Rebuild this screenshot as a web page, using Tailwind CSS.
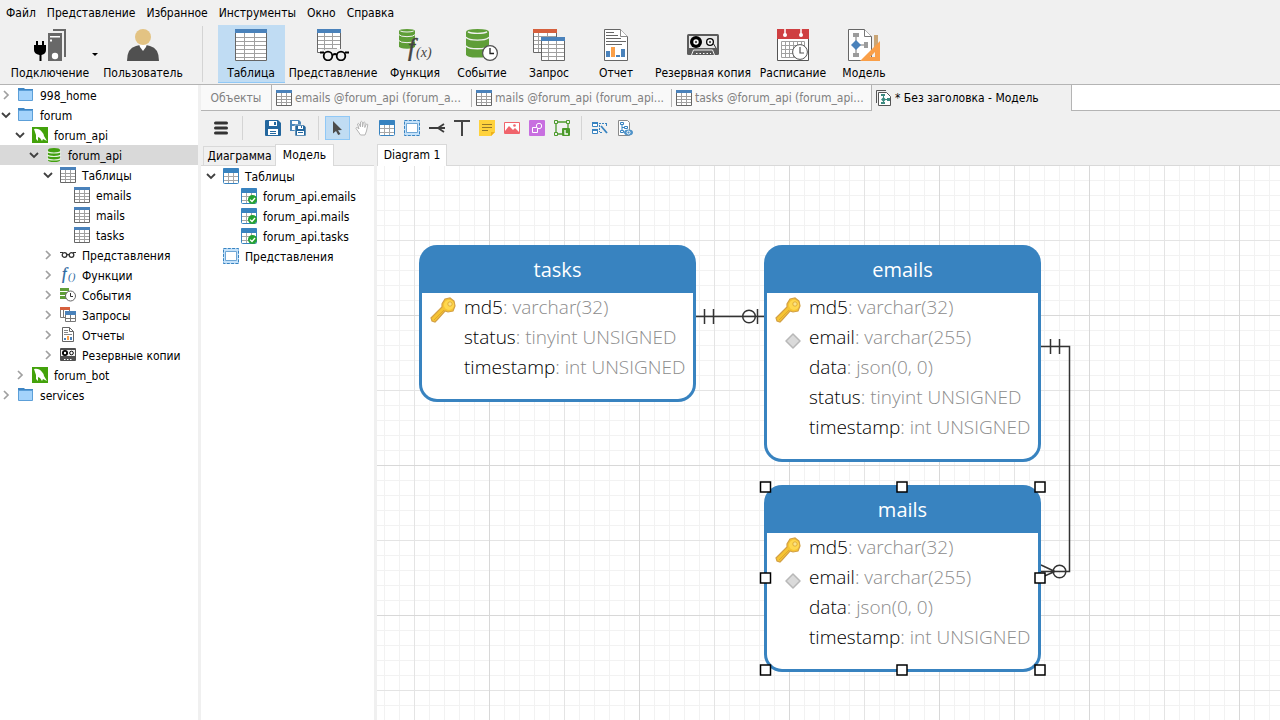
<!DOCTYPE html>
<html lang="ru">
<head>
    <meta charset="UTF-8">
    <meta name="viewport" content="width=device-width, initial-scale=1.0">
    <title>Без заголовка - Модель</title>
    <script src="https://cdn.jsdelivr.net/npm/@tailwindcss/browser@4"></script>
</head>
<body class="h-screen flex flex-col overflow-hidden bg-[#f0f0f0] text-black text-xs font-['DejaVu_Sans_Condensed','DejaVu_Sans',sans-serif]">

<!-- Icon set -->
<svg class="hidden">
    <symbol id="table32" viewBox="0 0 32 32">
        <path fill="#fff" d="M0 0h32v32H0z"/>
        <path stroke="#a0a0a0" d="M1 8.500h30M1 12.500h30M1 16.500h30M1 20.500h30M1 24.500h30M1 28.500h30M9.500 4v27M19.500 4v27"/>
        <path fill="none" stroke="#666" d="M.5.5h31v31H.5z"/>
        <path fill="#4a82bb" d="M0 0h32v4H0z"/>
    </symbol>
    <symbol id="table16" viewBox="0 0 16 16">
        <path fill="#fff" d="M0 0h16v16H0z"/>
        <path stroke="#a0a0a0" d="M1 6.500h14M1 9.500h14M1 12.500h14M5.500 3v12M10.500 3v12"/>
        <path fill="none" stroke="#666" d="M.5.5h15v15H.5z"/>
        <path fill="#4a82bb" d="M0 0h16v3H0z"/>
    </symbol>
    <symbol id="btable" viewBox="0 0 16 16">
        <rect x=".5" y=".5" width="15" height="15" rx="1" fill="#fff" stroke="#3883c0"/>
        <path stroke="#a8a8a8" d="M1 8.500h14M1 12.500h14M5.500 4v11M10.500 4v11"/>
        <path fill="#3883c0" d="M0 1q0-1 1-1h14q1 0 1 1v4H0z"/>
    </symbol>
    <symbol id="tablecheck" viewBox="0 0 16 16">
        <use href="#btable"/>
        <circle cx="11.500" cy="11.500" r="4.500" fill="#25a233"/>
        <path fill="none" stroke="#fff" stroke-width="1.300" d="M9 11.600l2 1.900 3-3.500"/>
    </symbol>
    <symbol id="bview" viewBox="0 0 16 16">
        <path fill="#c5e2fa" d="M0 0h16v16H0z"/>
        <path fill="none" stroke="#3883c0" stroke-dasharray="3 1.300" d="M.5.5h15v15H.5z"/>
        <path fill="#fff" stroke="#6ea6d5" d="M2.500 3.500h11v9h-11z"/>
    </symbol>
    <symbol id="server" viewBox="0 0 32 32">
        <path fill="#686868" d="M19 0h13v28h-2V2H19zM14 4h14v28H14z"/>
        <path fill="#fff" d="M16 7h10v1.500H16zM16 10.500h2v2h-2z"/>
        <circle cx="21" cy="27" r="3.200" fill="#fff"/>
        <path fill="#000" d="M2 12h2v4h4v-4h2v4h2v5q0 4-4.500 5v6h-2v-6Q0 25 0 21v-5h2z"/>
    </symbol>
    <symbol id="user" viewBox="0 0 32 32">
        <path fill="#505050" d="M0 32q0-13 9-15l4-1h6l4 1q9 2 9 15z"/>
        <path fill="#fff" d="M12 15h8l-1 3-3 4-3-4z"/>
        <circle cx="16" cy="8" r="8" fill="#e3c383"/>
    </symbol>
    <symbol id="view32" viewBox="0 0 32 32">
        <path fill="#fff" d="M0 0h24v20H5v3H0z"/>
        <path stroke="#a0a0a0" d="M0 7.500h24M0 11.500h24M0 15.500h24M0 19.500h20M7.500 4v17M15.500 4v16"/>
        <path fill="none" stroke="#666" d="M4 23.500H.5V1M23.500 1v19"/>
        <path fill="#4a82bb" d="M0 0h24v4H0z"/>
        <path fill="none" stroke="#000" stroke-width="1.800" d="M3 23.500h4M16 26q2-2 4 0M28 23.500h4"/>
        <circle cx="11" cy="27" r="4.300" fill="#f0f0f0" stroke="#000" stroke-width="1.800"/>
        <circle cx="24" cy="27" r="4.300" fill="#f0f0f0" stroke="#000" stroke-width="1.800"/>
    </symbol>
    <symbol id="db" viewBox="0 0 24 30" preserveAspectRatio="none">
        <path fill="#5f9e38" d="M0 3Q0 0 12 0t12 3v23q0 3.500-12 3.500T0 26z"/>
        <path fill="none" stroke="#f0f0f0" stroke-width="1.500" d="M0 8.500q2 3 12 3t12-3M0 17.500q2 3 12 3t12-3M2 3q3 1.500 10 1.500T22 3"/>
    </symbol>
    <symbol id="func32" viewBox="0 0 34 32">
        <use href="#db" x="1" y="0" width="16" height="20"/>
        <text x="10" y="27" font-family="Liberation Serif" font-style="italic" font-size="25" fill="#444" stroke="#444" stroke-width=".5">f</text>
        <text x="18" y="28" font-family="Liberation Serif" font-style="italic" font-size="14" fill="#444">(x)</text>
    </symbol>
    <symbol id="event32" viewBox="0 0 32 32">
        <use href="#db" x="0" y="0" width="23" height="29"/>
        <circle cx="24" cy="24" r="7.400" fill="#fff" stroke="#505050" stroke-width="1.200"/>
        <path fill="none" stroke="#222" stroke-width="1.300" d="M24 19v5.500h4"/>
    </symbol>
    <symbol id="query32" viewBox="0 0 32 32">
        <path fill="#fff" stroke="#666" d="M.5.5h23v23H.5z"/>
        <path stroke="#a0a0a0" d="M1 7.500h22M1 11.500h22M1 15.500h22M1 19.500h22M5.500 4v19M14.500 4v19"/>
        <path fill="#d6603d" d="M0 0h24v4H0z"/>
        <path fill="#fff" stroke="#666" d="M8.500 8.500h23v23h-23z"/>
        <path stroke="#a0a0a0" d="M9 15.500h22M9 19.500h22M9 23.500h22M9 27.500h22M15.500 12v19M23.500 12v19"/>
        <path fill="#4a82bb" d="M8 8h24v4H8z"/>
    </symbol>
    <symbol id="report32" viewBox="0 0 24 32">
        <path fill="#fff" stroke="#666" d="M.5.5h16l7 7v24H.5z"/>
        <path fill="#fff" stroke="#888" d="M16.500.5v7h7"/>
        <path stroke="#666" d="M2 3.500h8M2 6.500h12M2 9.500h15M2 12.500h20M2 15.500h16"/>
        <path fill="#4a82bb" d="M2 22h4v6H2zM12 26h4v2h-4zM17 20h4v8h-4z"/>
        <path fill="#fa9f48" d="M7 18h4v10H7z"/>
    </symbol>
    <symbol id="cassette" viewBox="0 0 32 32">
        <rect y="5" width="32" height="21" rx="1.500" fill="#5c5c5c"/>
        <path fill="#e8e8e8" d="M2 7h28v12H2z"/>
        <circle cx="9" cy="13" r="6" fill="#000"/><circle cx="9" cy="13" r="2.700" fill="#fff"/><circle cx="9" cy="13" r="1.200" fill="#555"/>
        <circle cx="23" cy="13" r="4" fill="#000"/><circle cx="23" cy="13" r="2.700" fill="#fff"/><circle cx="23" cy="13" r="1.200" fill="#555"/>
        <path stroke="#333" d="M26 14l3 5"/>
        <path fill="#5c5c5c" stroke="#f0f0f0" d="M4.500 26l2-5h19l2 5"/>
        <path stroke="#fff" stroke-dasharray="1.500 2" d="M9 24.500h15"/>
    </symbol>
    <symbol id="schedule" viewBox="0 0 32 32">
        <path fill="#fff" stroke="#555" d="M.5.5h31v31H.5z"/>
        <path fill="#cf3f41" d="M0 0h32v10H0z"/>
        <path stroke="#fff" stroke-width="1.500" d="M8 0v5M24 0v5"/>
        <circle cx="8" cy="6" r="2" fill="#fff"/><circle cx="24" cy="6" r="2" fill="#fff"/>
        <path fill="none" stroke="#a0a0a0" d="M4.500 12.500h23v16h-23zM4.500 16.500h23M4.500 20.500h23M4.500 24.500h23M8.500 12v16M12.500 12v16M16.500 12v16M20.500 12v16M24.500 12v16"/>
        <circle cx="23" cy="23" r="7.400" fill="#fff" stroke="#555"/>
        <path fill="none" stroke="#555" stroke-width="1.200" d="M23 18v6h4"/>
    </symbol>
    <symbol id="model32" viewBox="0 0 32 32">
        <path fill="#fff" stroke="#666" d="M.5.5h16l7 7v24H.5z"/>
        <path fill="#fff" stroke="#777" d="M16.500.5v7h7"/>
        <path stroke="#777" d="M8 6v20M8 16h10"/>
        <path fill="#9c9c9c" d="M5 4h6v4H5zM5 24h6v4H5zM16 13h4v6h-4z"/>
        <path fill="#4a82bb" d="M8 11l5 5-5 5-5-5z"/>
        <path fill="#c9a576" d="M26 6h4v14h-4z"/>
        <path fill="#fa9f48" fill-rule="evenodd" d="M32 12v20H12zM27 23l-5 5h5z"/>
    </symbol>
    <symbol id="folder" viewBox="0 0 16 16">
        <path fill="#3d85c4" d="M0 1h6l1 1h8v4H0z"/>
        <path fill="#a4d3fb" stroke="#5c9fd8" d="M.5 3.500h14v10H.5z"/>
    </symbol>
    <symbol id="mysql" viewBox="0 0 16 16">
        <path fill="#43a20b" d="M0 0h16v16H0z"/>
        <path fill="#fff" d="M2 2q5-1 8 3 2 2 2 4l3 5-4-2-1 2-2-3-2-1v4l-2-2V8z"/>
    </symbol>
    <symbol id="dbgreen" viewBox="0 0 16 16">
        <path fill="#43a00f" d="M2 3q0-2 6-2t6 2v10q0 2-6 2t-6-2z"/>
        <path fill="none" stroke="#e6f2df" stroke-width="1.200" d="M1 4.500q2 1.500 7 1.500t7-1.500M1 8q2 1.500 7 1.500T15 8M1 11.500q2 1.500 7 1.500t7-1.500"/>
    </symbol>
    <symbol id="glasses" viewBox="0 0 16 16">
        <path fill="none" stroke="#333" stroke-width="1.200" d="M0 5.500h3M13 5.500h3M7 8q1-1 2 0"/>
        <circle cx="4.500" cy="8" r="2.300" fill="#fff" stroke="#333" stroke-width="1.300"/>
        <circle cx="11.500" cy="8" r="2.300" fill="#fff" stroke="#333" stroke-width="1.300"/>
    </symbol>
    <symbol id="func16" viewBox="0 0 16 16">
        <text x="2" y="12" font-family="Liberation Serif" font-style="italic" font-size="16" fill="#2a66a0" stroke="#2a66a0" stroke-width=".3">f</text>
        <text x="8" y="13" font-family="Liberation Serif" font-style="italic" font-size="11" fill="#2a66a0">()</text>
    </symbol>
    <symbol id="event16" viewBox="0 0 16 16">
        <path fill="#5f9e38" d="M0 1h9v11H0z"/>
        <path stroke="#fff" d="M0 4.500h8M0 8.500h5"/>
        <circle cx="10.500" cy="9" r="5" fill="#fff" stroke="#666"/>
        <path fill="none" stroke="#333" d="M10.500 6v3.500H13"/>
    </symbol>
    <symbol id="query16" viewBox="0 0 16 16">
        <path fill="#fff" stroke="#777" d="M.5 1.500h9v9h-9zM3.500 3v7"/>
        <path fill="#d6603d" d="M0 0h10v3H0z"/>
        <path fill="#fff" stroke="#777" d="M5.500 5.500h10v9h-10zM5 11.500h10M10.500 7v8"/>
        <path fill="#4a82bb" d="M5 4h11v4H5z"/>
    </symbol>
    <symbol id="report16" viewBox="0 0 16 16">
        <path fill="#fff" stroke="#666" d="M2.500.5h7l4 4v10h-11zM9.500.5v4h4"/>
        <path stroke="#888" d="M4 3.500h4M4 5.500h4M4 7.500h8"/>
        <path fill="#4a82bb" d="M4 11h2v2H4zM10 10h2v3h-2z"/>
        <path fill="#fa9f48" d="M7 9h2v4H7z"/>
    </symbol>
    <symbol id="cassette16" viewBox="0 0 16 16">
        <rect y="1" width="16" height="13" rx="1" fill="#505050"/>
        <path fill="#f4f4f4" d="M1 3h14v6H1z"/>
        <circle cx="5" cy="6" r="3" fill="#000"/><circle cx="5" cy="6" r="1.200" fill="#fff"/>
        <circle cx="11.500" cy="6" r="1.800" fill="#fff" stroke="#000"/>
        <path stroke="#fff" stroke-dasharray="1.500 1.500" d="M4 12.500h9"/>
    </symbol>
    <symbol id="model16" viewBox="0 0 16 16">
        <path fill="none" stroke="#555" d="M.5 13V.5H10"/>
        <path fill="#fff" stroke="#555" d="M2.500 2.500h8l4 4v9h-12z"/>
        <path stroke="#3c8a80" d="M7.500 5v9M7 9.500h6"/>
        <path fill="#3c8a80" d="M5 4h4v2H5zM5 12h4v2H5zM11 8h3v3h-3zM7.500 7L10 9.500 7.500 12 5 9.500z"/>
    </symbol>
    <symbol id="right" viewBox="0 0 12 12"><path fill="none" stroke="#a0a0a0" stroke-width="1.700" d="M4 2l4 4-4 4"/></symbol>
    <symbol id="down" viewBox="0 0 12 12"><path fill="none" stroke="#404040" stroke-width="1.800" d="M2 4l4 4 4-4"/></symbol>
    <symbol id="save" viewBox="0 0 16 16">
        <path fill="#24679e" d="M1 0h12l3 3v12q0 1-1 1H1q-1 0-1-1V1q0-1 1-1z"/>
        <path fill="#fff" d="M4 1h8v5H4zM3 9h10v6H3z"/>
        <path fill="#24679e" d="M9 2h2v3H9z"/>
        <path stroke="#24679e" d="M5 11.500h6M5 13.500h6"/>
    </symbol>
    <symbol id="saveall" viewBox="0 0 16 16">
        <path fill="#4b87ba" d="M0 0h9l2 2v9H0z"/><path fill="#fff" d="M2 1h6v3H2zM2 6h4v4H2z"/>
        <path fill="#24679e" stroke="#f0f0f0" stroke-width=".6" d="M5 5h9l2 2v9H5z"/>
        <path fill="#fff" d="M8 6h5v3H8zM7 11h7v4H7z"/><path fill="#24679e" d="M11 6h1v2h-1zM8 12h5v1H8z"/>
    </symbol>
    <symbol id="cursor" viewBox="0 0 16 16"><path fill="#4c4c4c" d="M4 1l9 9-4 .3L11.500 14l-2.300 1L7 11l-3 2.500z"/></symbol>
    <symbol id="hand" viewBox="0 0 16 16"><path fill="#fff" stroke="#b4b4b4" d="M4.500 12L2 8.500q0-1.500 1.500-.8L5 9 3.500 4q.8-1.300 1.700 0L6.500 7V2q1-1.300 1.800 0L8.500 7l.9-4.500q1-1 1.700.2L10.800 7.500l1.500-3.300q1.300-.6 1.500.6L12.500 11l-1.500 4H6.500z"/></symbol>
    <symbol id="relation" viewBox="0 0 16 16"><path fill="none" stroke="#3c3c3c" stroke-width="1.800" d="M0 8h16M9 8l6-4M9 8l6 4"/></symbol>
    <symbol id="label" viewBox="0 0 16 16"><path fill="#444" d="M0 0h16v2H9v14H7V2H0z"/></symbol>
    <symbol id="note" viewBox="0 0 16 16">
        <path fill="#ffd23c" d="M0 0h16v12l-4 4H0z"/><path fill="#eeb21d" d="M16 12h-4v4z"/>
        <path stroke="#96782a" d="M3 4.500h10M3 7.500h10M3 10.500h6"/>
    </symbol>
    <symbol id="image" viewBox="0 0 16 16">
        <path fill="#fff" stroke="#f0646c" d="M.5 2.500h15v11H.5z"/>
        <path fill="#f0646c" d="M1 11l4-5 4 4 2-2 4 4v2H1z"/><circle cx="10.500" cy="5.500" r="1.300" fill="#f0646c"/>
    </symbol>
    <symbol id="shape" viewBox="0 0 16 16">
        <rect width="16" height="16" rx="1" fill="#c86fe0"/>
        <path fill="none" stroke="#fff" d="M3.500 7.500h5v5h-5z"/><circle cx="10" cy="6" r="2.700" fill="#c86fe0" stroke="#fff"/>
    </symbol>
    <symbol id="layer" viewBox="0 0 16 16">
        <path fill="none" stroke="#4c9a2c" stroke-width="1.300" d="M2 2h12v12H2z"/>
        <path fill="#f0f0f0" stroke="#4c9a2c" d="M.5.5h3v3h-3zM12.500.5h3v3h-3zM.5 12.500h3v3h-3z"/>
        <rect x="8" y="8" width="8" height="8" rx="1" fill="#4c9a2c"/><path fill="none" stroke="#fff" stroke-width="1.300" d="M11 10v4h3"/>
    </symbol>
    <symbol id="autolayout" viewBox="0 0 16 16">
        <path fill="#fff" stroke="#3883c0" d="M.5 2.500h5v4h-5zM.5 9.500h5v4h-5z"/><path stroke="#3883c0" stroke-width="2" d="M0 3h6M0 10h6"/>
        <path fill="none" stroke="#3883c0" stroke-dasharray="2 1" d="M7 3.500h8M14.500 4v3M8 12.500h3M7.500 5v7"/>
        <path stroke="#3883c0" stroke-width="1.800" d="M9 6l6 7"/>
    </symbol>
    <symbol id="modelview" viewBox="0 0 16 16">
        <path fill="#fff" stroke="#8a8a8a" d="M1.500.5h9l2 2v13h-11z"/>
        <path fill="none" stroke="#3883c0" d="M3.500 2.500h3v2h-3zM7.500 6.500h3v2h-3zM3.500 10.500h3v2h-3zM5 5v5M5 7.500h2"/>
        <ellipse cx="11.500" cy="12.500" rx="4.500" ry="3" fill="#4f93c9"/><circle cx="11.500" cy="12.500" r="1.500" fill="#4f93c9" stroke="#fff"/>
    </symbol>
    <symbol id="key" viewBox="0 0 26 26">
        <path fill="#f6c433" stroke="#d3a045" stroke-width="1.200" d="M15 2l5-1 4 3 1 5-2 5-5 1-3-1-8 9-2 2-3-1-1-3 11-11V7z"/>
        <path fill="none" stroke="#e0a82c" d="M4 23l10-10"/>
        <circle cx="19" cy="8" r="5" fill="#ffd84f"/><circle cx="20" cy="7" r="2.200" fill="#fbe38a" stroke="#d9a32d" stroke-width=".8"/>
    </symbol>
    <symbol id="diamond" viewBox="0 0 16 16"><path fill="#dadada" stroke="#b8b8b8" stroke-width="1.500" stroke-linejoin="round" d="M8 1l7 7-7 7-7-7z"/></symbol>
</svg>

<nav class="flex shrink-0 h-[25px] items-center gap-[11px] pl-1.5">
    <button>Файл</button>
    <button>Представление</button>
    <button>Избранное</button>
    <button>Инструменты</button>
    <button>Окно</button>
    <button>Справка</button>
</nav>

<header class="flex shrink-0 h-[60px] border-b border-[#b4b4b4] whitespace-nowrap">
    <button class="w-[100px] h-[58px] pt-1 flex flex-col items-center gap-1 relative">
        <svg class="size-8"><use href="#server"/></svg>
        <span>Подключение</span>
        <span class="absolute right-0.5 top-7 border-x-3 border-t-3 border-x-transparent border-t-black"></span>
    </button>
    <button class="w-[86px] h-[58px] pt-1 flex flex-col items-center gap-1"><svg class="size-8"><use href="#user"/></svg><span>Пользователь</span></button>
    <div class="w-px h-14 ml-4 mr-[15px] mt-px bg-[#d4d4d4]"></div>
    <button class="w-[67px] h-[58px] pt-1 pr-px flex flex-col items-center gap-1 bg-[#c0dcf3] border-b border-[#90c8f6]"><svg class="size-8 shrink-0"><use href="#table32"/></svg><span>Таблица</span></button>
    <button class="w-[97px] h-[58px] pt-1 pr-px flex flex-col items-center gap-1"><svg class="size-8"><use href="#view32"/></svg><span>Представление</span></button>
    <button class="w-[67px] h-[58px] pt-1 pr-px flex flex-col items-center gap-1"><svg class="w-[34px] h-8"><use href="#func32"/></svg><span>Функция</span></button>
    <button class="w-[67px] h-[58px] pt-1 pr-px flex flex-col items-center gap-1"><svg class="size-8"><use href="#event32"/></svg><span>Событие</span></button>
    <button class="w-[67px] h-[58px] pt-1 pr-px flex flex-col items-center gap-1"><svg class="size-8"><use href="#query32"/></svg><span>Запрос</span></button>
    <button class="w-[67px] h-[58px] pt-1 pr-px flex flex-col items-center gap-1"><svg class="w-6 h-8"><use href="#report32"/></svg><span>Отчет</span></button>
    <button class="w-[106px] h-[58px] pt-1 flex flex-col items-center gap-1"><svg class="size-8"><use href="#cassette"/></svg><span>Резервная копия</span></button>
    <button class="w-[74px] h-[58px] pt-1 flex flex-col items-center gap-1"><svg class="size-8"><use href="#schedule"/></svg><span>Расписание</span></button>
    <button class="w-[68px] h-[58px] pt-1 flex flex-col items-center gap-1"><svg class="size-8"><use href="#model32"/></svg><span>Модель</span></button>
</header>

<main class="flex flex-1 min-h-0">
    <aside class="w-[198px] mr-[3px] shrink-0 bg-white"><ul id="objectTree"></ul></aside>

    <section class="flex flex-1 min-w-0 flex-col">
        <div class="flex shrink-0 h-[26px] bg-white whitespace-nowrap text-[#808080]">
            <button class="w-[71px] bg-[#f9f9f9] border-r border-b border-[#b4b4b4]">Объекты</button>
            <button class="w-[199px] flex items-center gap-[3px] pl-1 bg-[#f9f9f9] border-b border-[#b4b4b4]"><svg class="size-4"><use href="#table16"/></svg>emails @forum_api (forum_a...</button>
            <button class="w-[200px] flex items-center bg-[#f9f9f9] border-b border-[#b4b4b4]"><span class="flex items-center gap-[3px] h-[18px] pl-1 border-l border-[#b4b4b4]"><svg class="size-4"><use href="#table16"/></svg>mails @forum_api (forum_api...</span></button>
            <button class="w-[200px] flex items-center bg-[#f9f9f9] border-b border-[#b4b4b4]"><span class="flex items-center gap-[3px] h-[18px] pl-1 border-l border-[#b4b4b4]"><svg class="size-4"><use href="#table16"/></svg>tasks @forum_api (forum_api...</span></button>
            <button class="w-[201px] flex items-center gap-[3px] pl-1 bg-[#f0f0f0] border-x border-[#b4b4b4] text-black"><svg class="size-4"><use href="#model16"/></svg>* Без заголовка - Модель</button>
            <div class="flex-1 border-b border-[#b4b4b4]"></div>
        </div>

        <div class="flex shrink-0 h-[33px] items-center pl-2">
            <button class="w-[25px] h-6 pr-px flex items-center justify-center" aria-label="Меню"><svg class="size-4" viewBox="0 0 16 16"><path stroke="#333" stroke-width="3" stroke-linecap="round" d="M2.500 3h11M2.500 8h11M2.500 13h11"/></svg></button>
            <div class="w-px h-6 ml-2 mr-[18px] bg-[#d4d4d4]"></div>
            <button class="w-[25px] h-6 pr-px flex items-center justify-center" aria-label="Сохранить"><svg class="size-4"><use href="#save"/></svg></button>
            <button class="w-[25px] h-6 pr-px flex items-center justify-center" aria-label="Сохранить все"><svg class="size-4"><use href="#saveall"/></svg></button>
            <div class="w-px h-6 ml-[7px] mr-1.5 bg-[#d4d4d4]"></div>
            <button class="w-[25px] h-6 pr-px flex items-center justify-center bg-[#c0dcf3] border border-[#90c8f6]" aria-label="Выбор"><svg class="size-4"><use href="#cursor"/></svg></button>
            <button class="w-[25px] h-6 pr-px flex items-center justify-center" aria-label="Рука"><svg class="size-4"><use href="#hand"/></svg></button>
            <button class="w-[25px] h-6 pr-px flex items-center justify-center" aria-label="Таблица"><svg class="size-4"><use href="#btable"/></svg></button>
            <button class="w-[25px] h-6 pr-px flex items-center justify-center" aria-label="Представление"><svg class="size-4"><use href="#bview"/></svg></button>
            <button class="w-[25px] h-6 pr-px flex items-center justify-center" aria-label="Связь"><svg class="size-4"><use href="#relation"/></svg></button>
            <button class="w-[25px] h-6 pr-px flex items-center justify-center" aria-label="Текст"><svg class="size-4"><use href="#label"/></svg></button>
            <button class="w-[25px] h-6 pr-px flex items-center justify-center" aria-label="Заметка"><svg class="size-4"><use href="#note"/></svg></button>
            <button class="w-[25px] h-6 pr-px flex items-center justify-center" aria-label="Изображение"><svg class="size-4"><use href="#image"/></svg></button>
            <button class="w-[25px] h-6 pr-px flex items-center justify-center" aria-label="Фигура"><svg class="size-4"><use href="#shape"/></svg></button>
            <button class="w-[25px] h-6 pr-px flex items-center justify-center" aria-label="Слой"><svg class="size-4"><use href="#layer"/></svg></button>
            <div class="w-px h-6 mx-1.5 bg-[#d4d4d4]"></div>
            <button class="w-[25px] h-6 pr-px flex items-center justify-center" aria-label="Авторасположение"><svg class="size-4"><use href="#autolayout"/></svg></button>
            <button class="w-[25px] h-6 pr-px flex items-center justify-center" aria-label="Просмотр модели"><svg class="size-4"><use href="#modelview"/></svg></button>
        </div>

        <div class="flex flex-1 min-h-0">
            <div class="flex flex-col w-[173px] mr-[3px] shrink-0">
                <div class="flex h-[22px] items-end pl-0.5 border-b border-[#d9d9d9]">
                    <button class="w-[72px] h-[19px] border-l border-t border-[#d9d9d9]">Диаграмма</button>
                    <button class="w-[59px] h-[22px] -mb-px pb-0.5 bg-white border border-b-0 border-[#d9d9d9]">Модель</button>
                </div>
                <ul id="modelTree" class="flex-1 bg-white"></ul>
            </div>

            <div class="flex flex-col flex-1 min-w-0">
                <div class="flex h-[22px] items-end border-b border-[#d9d9d9]">
                    <button class="w-[70px] h-[22px] -mb-px pb-0.5 bg-white border border-b-0 border-[#d9d9d9]">Diagram 1</button>
                </div>
                <div id="canvas" class="relative flex-1 overflow-hidden bg-white font-['Open_Sans',sans-serif] text-[19px]">
                    <svg class="absolute inset-0 size-full">
                        <defs>
                            <pattern id="minor" x="7" y="14" width="15" height="15" patternUnits="userSpaceOnUse"><path fill="#f2f2f2" d="M0 0h15v1H0zM0 0h1v15H0z"/></pattern>
                            <pattern id="major" x="37" y="74" width="75" height="75" patternUnits="userSpaceOnUse"><path fill="#e4e4e4" d="M0 0h75v1H0zM0 0h1v75H0z"/></pattern>
                            <pattern id="page" x="112" y="149" width="150" height="150" patternUnits="userSpaceOnUse"><path fill="#d8d8d8" d="M0 0h150v1H0zM0 0h1v150H0z"/></pattern>
                        </defs>
                        <rect width="100%" height="100%" fill="url(#minor)"/>
                        <rect width="100%" height="100%" fill="url(#major)"/>
                        <rect width="100%" height="100%" fill="url(#page)"/>
                        <g fill="none" stroke="#333" stroke-width="1.500">
                            <path d="M319 150.500h68M327.500 143v15M336.500 143v15M380.500 143v15"/>
                            <circle cx="372" cy="150.500" r="6.300"/>
                            <path d="M664 180.500h28.500v225H664M673.500 173v15M682.500 173v15M664 399l14 6.500-14 6"/>
                            <circle cx="682.500" cy="405.500" r="6.300"/>
                        </g>
                    </svg>
                </div>
            </div>
        </div>
    </section>
</main>

<script>
    // [level, arrow, icon, label, selected]
    var objects = [
        [0, "right", "folder", "998_home"],
        [0, "down", "folder", "forum"],
        [1, "down", "mysql", "forum_api"],
        [2, "down", "dbgreen", "forum_api", true],
        [3, "down", "table16", "Таблицы"],
        [4, "", "table16", "emails"],
        [4, "", "table16", "mails"],
        [4, "", "table16", "tasks"],
        [3, "right", "glasses", "Представления"],
        [3, "right", "func16", "Функции"],
        [3, "right", "event16", "События"],
        [3, "right", "query16", "Запросы"],
        [3, "right", "report16", "Отчеты"],
        [3, "right", "cassette16", "Резервные копии"],
        [1, "right", "mysql", "forum_bot"],
        [0, "right", "folder", "services"]
    ];

    var model = [
        [0, "down", "btable", "Таблицы"],
        [1, "", "tablecheck", "forum_api.emails"],
        [1, "", "tablecheck", "forum_api.mails"],
        [1, "", "tablecheck", "forum_api.tasks"],
        [0, "", "bview", "Представления"]
    ];

    function renderTree(id, rows, indent, start) {
        document.getElementById(id).innerHTML = rows.map(([level, arrow, icon, label, selected]) =>
            `<li><button class="flex w-full h-5 items-center whitespace-nowrap ${selected ? 'bg-[#d9d9d9]' : ''}" style="padding-left:${start + level * indent}px">
                <svg class="size-3 mr-1.5 shrink-0">${arrow ? `<use href="#${arrow}"/>` : ''}</svg>
                <svg class="size-4 mr-1.5 shrink-0"><use href="#${icon}"/></svg><span class="pt-0.5">${label}</span></button></li>`).join("");
    }

    renderTree("objectTree", objects, 14, 0);
    renderTree("modelTree", model, 18, 4);

    var fields = {
        md5: ["key", "varchar(32)"],
        email: ["diamond", "varchar(255)"],
        data: ["", "json(0, 0)"],
        status: ["", "tinyint UNSIGNED"],
        timestamp: ["", "int UNSIGNED"]
    };
    var entities = [
        { name: "tasks", x: 42, y: 79, columns: ["md5", "status", "timestamp"] },
        { name: "emails", x: 387, y: 79, columns: ["md5", "email", "data", "status", "timestamp"] },
        { name: "mails", x: 387, y: 319, columns: ["md5", "email", "data", "timestamp"] }
    ];
    var iconClass = { key: "size-[26px] mt-1 mr-1", diamond: "size-4 mt-1.5 mr-1" };

    var canvas = document.getElementById("canvas");
    entities.forEach(e => {
        var rows = e.columns.map(c => {
            var [icon, type] = fields[c];
            return `<li class="flex h-[30px] items-center whitespace-nowrap">
                <span class="w-[42px] flex justify-end pr-1">${icon ? `<svg class="${iconClass[icon]}"><use href="#${icon}"/></svg>` : ''}</span>
                <span class="font-light text-[#8c8c8c]"><span class="text-black">${c}</span>: ${type}</span></li>`;
        }).join("");
        canvas.insertAdjacentHTML("beforeend", `<article class="absolute w-[277px] p-[3px] bg-[#3883c0] rounded-[18px]" style="left:${e.x}px;top:${e.y}px">
            <h2 class="h-[45px] leading-[43px] text-center text-white text-xl font-medium">${e.name}</h2>
            <ul class="-mt-px pb-4 bg-white bg-clip-padding border-t border-[#3883c0] rounded-b-[15px]">${rows}</ul></article>`);
    });

    // selection handles of the active entity
    var handles = [[388.5, 321], [525, 321], [663, 321], [388.5, 412], [663, 412], [388.5, 504], [525, 504], [663, 504]];
    canvas.insertAdjacentHTML("beforeend", `<svg class="absolute inset-0 size-full" fill="#fff" stroke="#000" stroke-width="1.500">${
        handles.map(([x, y]) => `<rect x="${x - 5}" y="${y - 5}" width="10" height="10"/>`).join("")}</svg>`);
</script>

</body>
</html>
